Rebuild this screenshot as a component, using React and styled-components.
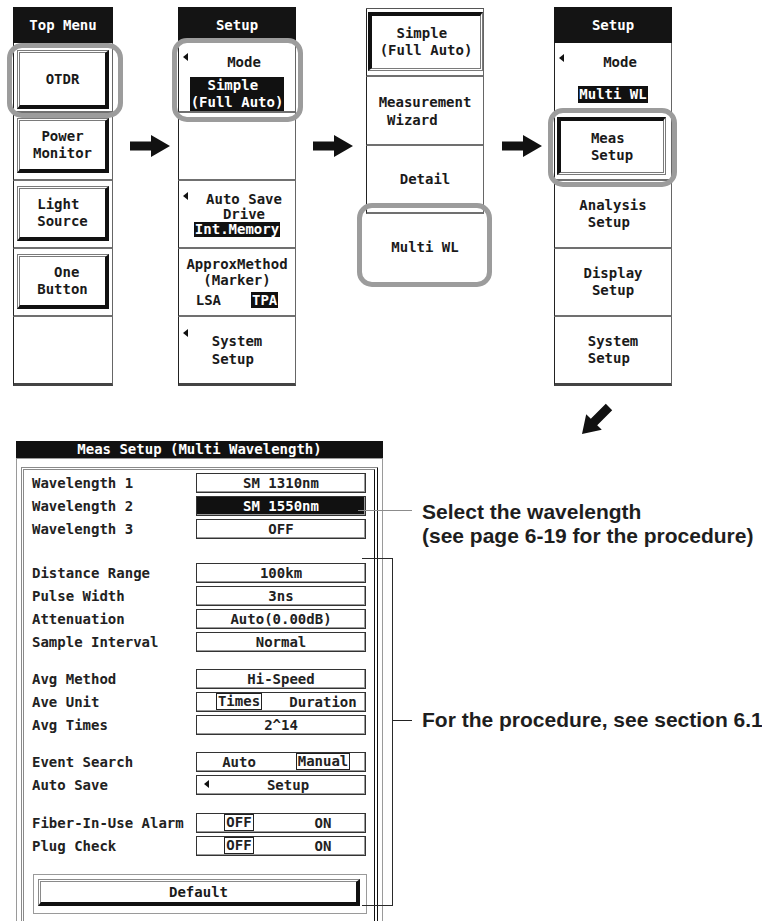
import React from "react";
import styled, { createGlobalStyle, css } from "styled-components";

const GlobalStyle = createGlobalStyle`
  html, body {
    margin: 0;
    padding: 0;
    background: #fff;
  }
  body {
    width: 762px;
    height: 921px;
    overflow: hidden;
    font-family: "DejaVu Sans Mono", "Liberation Mono", monospace;
    font-size: 14px;
    font-weight: bold;
    color: #1a1a1a;
  }
  * { box-sizing: border-box; }
`;

const Page = styled.div`
  width: 762px;
  height: 921px;
  overflow: hidden;
  background: #fff;
`;

/* ---------- top row of soft-key menus ---------- */

const TopRow = styled.div`
  display: flex;
  align-items: flex-start;
  padding: 7px 0 0 13px;
`;

const Panel = styled.div`
  flex: none;
  width: ${(p) => p.$w}px;
  margin-left: ${(p) => p.$ml || 0}px;
  margin-top: ${(p) => p.$mt || 0}px;
  display: flex;
  flex-direction: column;
  ${(p) => p.$framed && css`border-top: 1px solid #555;`}
`;

const Header = styled.div`
  height: 36px;
  background: #141414;
  color: #fff;
  display: flex;
  align-items: center;
  justify-content: center;
`;

const Section = styled.div`
  position: relative;
  height: ${(p) => p.$h}px;
  border-left: 1px solid #222;
  border-right: 1px solid #666;
  border-bottom: ${(p) => (p.$last ? "3px solid #444" : "2px solid #707070")};
  display: flex;
  flex-direction: column;
  align-items: center;
  justify-content: ${(p) => (p.$pad ? "flex-start" : "center")};
  padding-top: ${(p) => p.$pad || 0}px;
  ${(p) => p.$bare && css`border-color: transparent;`}
`;

const Key = styled.div`
  align-self: stretch;
  flex: 1;
  margin: ${(p) => p.$m || "5px 3px 6px 3px"};
  display: flex;
  align-items: center;
  justify-content: center;
  ${(p) =>
    p.$pressed
      ? css`
          border-top: 4px solid #111;
          border-left: 4px solid #111;
          border-right: 3px double #7a7a7a;
          border-bottom: 3px double #7a7a7a;
        `
      : css`
          border-top: 3px double #7a7a7a;
          border-left: 3px double #7a7a7a;
          border-right: 4px solid #111;
          border-bottom: 4px solid #111;
        `}
`;

const Ring = styled.div`
  position: absolute;
  top: ${(p) => p.$t}px;
  right: ${(p) => p.$r}px;
  bottom: ${(p) => p.$b}px;
  left: ${(p) => p.$l}px;
  border: 5px solid #9c9c9c;
  border-radius: 15px;
  z-index: 2;
  pointer-events: none;
`;

const Pointer = styled.span`
  position: absolute;
  left: ${(p) => p.$x ?? 4}px;
  top: ${(p) => p.$y ?? 10}px;
  width: 0;
  height: 0;
  border-top: 4.5px solid transparent;
  border-bottom: 4.5px solid transparent;
  border-right: 5px solid #111;
`;

const Text = styled.div`
  display: inline-block;
  white-space: pre;
  text-align: ${(p) => p.$align || "left"};
  line-height: ${(p) => p.$lh || 17}px;
  padding-left: ${(p) => p.$shift || 0}px;
  margin-top: ${(p) => p.$mt || 0}px;
`;

const Inverse = styled.span`
  display: inline-block;
  white-space: pre;
  text-align: left;
  background: #111;
  color: #fff;
  line-height: ${(p) => p.$lh || 17}px;
  padding: 0 1px;
`;

const ValueSlot = styled.div`
  height: 34px;
  margin-top: 7px;
  display: flex;
  align-items: center;
  justify-content: center;
`;

const ChoiceRow = styled.div`
  display: flex;
  align-items: center;
  gap: 30px;
  margin-top: 4px;
  line-height: 16px;
`;

const ArrowSvg = styled.svg`
  flex: none;
  margin-top: 128px;
  margin-left: ${(p) => p.$ml}px;
`;

function Arrow({ ml }) {
  return (
    <ArrowSvg $ml={ml} width="40" height="22" viewBox="0 0 40 22">
      <polygon points="0,6.5 21,6.5 21,0 40,11 21,22 21,15.5 0,15.5" fill="#111" />
    </ArrowSvg>
  );
}

function Lines({ lines, align, lh, shift }) {
  return (
    <Text $align={align} $lh={lh} $shift={shift}>
      {lines.join("\n")}
    </Text>
  );
}

const SECTIONS = [70, 68, 68, 68, 69];

function TopMenu() {
  return (
    <Panel $w={100}>
      <Header>Top Menu</Header>
      <Section $h={SECTIONS[0]}>
        <Key $m="7px 3px 2px 3px">
          <Lines lines={["OTDR"]} />
        </Key>
        <Ring $t={0} $r={-11} $b={-7} $l={-7} />
      </Section>
      <Section $h={SECTIONS[1]}>
        <Key>
          <Lines lines={[" Power", "Monitor"]} />
        </Key>
      </Section>
      <Section $h={SECTIONS[2]}>
        <Key>
          <Lines lines={["Light", "Source"]} />
        </Key>
      </Section>
      <Section $h={SECTIONS[3]}>
        <Key>
          <Lines lines={["  One", "Button"]} />
        </Key>
      </Section>
      <Section $h={SECTIONS[4]} $last />
    </Panel>
  );
}

function SetupMenu() {
  return (
    <Panel $w={118} $ml={8}>
      <Header>Setup</Header>
      <Section $h={SECTIONS[0]} $pad={11}>
        <Pointer $y={10} />
        <Text $lh={16} $shift={14}>Mode</Text>
        <ValueSlot>
          <Inverse>{"  Simple\n(Full Auto)"}</Inverse>
        </ValueSlot>
        <Ring $t={-5} $r={-8} $b={-11} $l={-7} />
      </Section>
      <Section $h={SECTIONS[1]} />
      <Section $h={SECTIONS[2]}>
        <Pointer $y={11} />
        <Text $lh={15} $shift={14} $align="center">{"Auto Save\nDrive"}</Text>
        <Inverse $lh={15}>Int.Memory</Inverse>
      </Section>
      <Section $h={SECTIONS[3]}>
        <Text $lh={16} $align="center">{"ApproxMethod\n(Marker)"}</Text>
        <ChoiceRow>
          <span>LSA</span>
          <Inverse $lh={16}>TPA</Inverse>
        </ChoiceRow>
      </Section>
      <Section $h={SECTIONS[4]} $last>
        <Pointer $y={12} />
        <Lines lines={["System", "Setup"]} lh={18} />
      </Section>
    </Panel>
  );
}

function ModeMenu() {
  return (
    <Panel $w={118} $ml={13} $mt={1} $framed>
      <Section $h={68}>
        <Key $pressed $m="3px 0 4px 1px">
          <Lines lines={["  Simple", "(Full Auto)"]} />
        </Key>
      </Section>
      <Section $h={69}>
        <Lines lines={["Measurement", " Wizard"]} lh={18} />
      </Section>
      <Section $h={68}>
        <Lines lines={["Detail"]} />
      </Section>
      <Section $h={69} $bare>
        <Lines lines={["Multi WL"]} />
        <Ring $t={-11} $r={-9} $b={-6} $l={-10} />
      </Section>
    </Panel>
  );
}

function MultiSetupMenu() {
  return (
    <Panel $w={118} $ml={12}>
      <Header>Setup</Header>
      <Section $h={SECTIONS[0]} $pad={11}>
        <Pointer $y={11} />
        <Text $lh={16} $shift={14}>Mode</Text>
        <ValueSlot>
          <Inverse>Multi WL</Inverse>
        </ValueSlot>
      </Section>
      <Section $h={SECTIONS[1]}>
        <Key $pressed $m="4px 5px 4px 2px">
          <Lines lines={["Meas", "Setup"]} />
        </Key>
        <Ring $t={-5} $r={-6} $b={-8} $l={-7} />
      </Section>
      <Section $h={SECTIONS[2]}>
        <Lines lines={["Analysis", " Setup"]} />
      </Section>
      <Section $h={SECTIONS[3]}>
        <Lines lines={["Display", " Setup"]} />
      </Section>
      <Section $h={SECTIONS[4]} $last>
        <Lines lines={["System", "Setup"]} />
      </Section>
    </Panel>
  );
}

const DiagRow = styled.div`
  padding-left: 581px;
  margin-top: 17px;
  height: 32px;
`;

/* ---------- Meas Setup dialog ---------- */

const BottomArea = styled.div`
  position: relative;
  display: flex;
  align-items: flex-start;
  margin-top: 6px;
`;

const Dialog = styled.div`
  flex: none;
  width: 367px;
  margin-left: 16px;
  display: flex;
  flex-direction: column;
`;

const DialogTitle = styled.div`
  height: 17px;
  background: #111;
  color: #fff;
  text-align: center;
  line-height: 17px;
`;

const DialogBody = styled.div`
  border-top: 1px solid #9a9a9a;
  border-left: 1px solid #9a9a9a;
  border-right: 1px solid #9a9a9a;
  padding: 8px 4px 0 4px;
  height: 470px;
`;

const Frame = styled.div`
  height: 100%;
  border-top: 3px double #8a8a8a;
  border-left: 3px double #8a8a8a;
  border-right: 4px double #111;
  padding: 1px 8px 0 8px;
`;

const Group = styled.div`
  margin-top: ${(p) => p.$gap || 0}px;
`;

const Row = styled.div`
  height: 23px;
  display: flex;
  align-items: center;
`;

const RowLabel = styled.div`
  flex: 1;
  white-space: pre;
  color: #222;
`;

const Field = styled.div`
  position: relative;
  flex: none;
  width: 170px;
  height: 20px;
  border: 1px solid #333;
  box-shadow: inset -1px -1px 0 #9a9a9a;
  display: flex;
  align-items: center;
  justify-content: center;
  line-height: 16px;
  padding-left: ${(p) => p.$shift || 0}px;
  background: ${(p) => (p.$inverse ? "#111" : "#fff")};
  color: ${(p) => (p.$inverse ? "#fff" : "#222")};
`;

const Half = styled.div`
  flex: 1;
  display: flex;
  justify-content: center;
`;

const Chip = styled.span`
  border: 1px solid #222;
  line-height: 15px;
  padding: 0 1px;
`;

const ButtonWell = styled.div`
  margin: 17px -1px 0 1px;
  height: 40px;
  border: 1px solid #9a9a9a;
  padding: 4px 6px 7px 4px;
`;

const DefaultKey = styled.div`
  height: 27px;
  border-top: 3px double #8a8a8a;
  border-left: 3px double #8a8a8a;
  border-right: 4px solid #111;
  border-bottom: 4px solid #111;
  display: flex;
  align-items: center;
  justify-content: center;
`;

/* ---------- callouts ---------- */

const Notes = styled.div`
  flex: 1;
  padding: 59px 0 0 39px;
  font-family: "Liberation Sans", Arial, sans-serif;
  font-weight: bold;
  font-size: 21px;
  line-height: 24px;
  color: #1e1e1e;
  white-space: nowrap;
`;

const Note = styled.div`
  margin-top: ${(p) => p.$mt || 0}px;
`;

const Leader = styled.div`
  position: absolute;
  left: ${(p) => p.$x}px;
  top: ${(p) => p.$y}px;
  width: ${(p) => p.$w}px;
  border-top: 1px solid ${(p) => p.$color || "#222"};
  z-index: 3;
`;

const Bracket = styled.div`
  position: absolute;
  left: 362px;
  top: 117px;
  width: 31px;
  height: 348px;
  border: 1px solid #2a2a2a;
  border-left: none;
  z-index: 3;
`;

const ROWS = [
  {
    gap: 0,
    rows: [
      ["Wavelength 1", <Field key="a">SM 1310nm</Field>],
      ["Wavelength 2", <Field key="a" $inverse>SM 1550nm</Field>],
      ["Wavelength 3", <Field key="a">OFF</Field>],
    ],
  },
  {
    gap: 21,
    rows: [
      ["Distance Range", <Field key="a">100km</Field>],
      ["Pulse Width", <Field key="a">3ns</Field>],
      ["Attenuation", <Field key="a">Auto(0.00dB)</Field>],
      ["Sample Interval", <Field key="a">Normal</Field>],
    ],
  },
  {
    gap: 14,
    rows: [
      ["Avg Method", <Field key="a">Hi-Speed</Field>],
      [
        "Ave Unit",
        <Field key="a">
          <Half><Chip>Times</Chip></Half>
          <Half>Duration</Half>
        </Field>,
      ],
      ["Avg Times", <Field key="a">2^14</Field>],
    ],
  },
  {
    gap: 14,
    rows: [
      [
        "Event Search",
        <Field key="a">
          <Half>Auto</Half>
          <Half><Chip>Manual</Chip></Half>
        </Field>,
      ],
      [
        "Auto Save",
        <Field key="a" $shift={14}>
          <Pointer $x={7} $y={4.5} />
          Setup
        </Field>,
      ],
    ],
  },
  {
    gap: 15,
    rows: [
      [
        "Fiber-In-Use Alarm",
        <Field key="a">
          <Half><Chip>OFF</Chip></Half>
          <Half>ON</Half>
        </Field>,
      ],
      [
        "Plug Check",
        <Field key="a">
          <Half><Chip>OFF</Chip></Half>
          <Half>ON</Half>
        </Field>,
      ],
    ],
  },
];

export default function App() {
  return (
    <Page>
      <GlobalStyle />
      <TopRow>
        <TopMenu />
        <Arrow ml={17} />
        <SetupMenu />
        <Arrow ml={17} />
        <ModeMenu />
        <Arrow ml={18} />
        <MultiSetupMenu />
      </TopRow>

      <DiagRow>
        <svg width="32" height="32" viewBox="0 0 32 32">
          <polygon
            points="1,31 20.8,26.8 16.2,22.2 31.2,7.2 24.8,0.8 9.8,15.8 5.2,11.2"
            fill="#111"
          />
        </svg>
      </DiagRow>

      <BottomArea>
        <Dialog>
          <DialogTitle>Meas Setup (Multi Wavelength)</DialogTitle>
          <DialogBody>
            <Frame>
              {ROWS.map((g, i) => (
                <Group key={i} $gap={g.gap}>
                  {g.rows.map(([label, field]) => (
                    <Row key={label}>
                      <RowLabel>{label}</RowLabel>
                      {field}
                    </Row>
                  ))}
                </Group>
              ))}
              <ButtonWell>
                <DefaultKey>Default</DefaultKey>
              </ButtonWell>
            </Frame>
          </DialogBody>
        </Dialog>

        <Notes>
          <Note>
            Select the wavelength
            <br />
            (see page 6-19 for the procedure)
          </Note>
          <Note $mt={160}>For the procedure, see section 6.1</Note>
        </Notes>

        <Leader $x={358} $y={69} $w={54} $color="#8c8c8c" />
        <Bracket />
        <Leader $x={393} $y={279} $w={19} />
      </BottomArea>
    </Page>
  );
}
